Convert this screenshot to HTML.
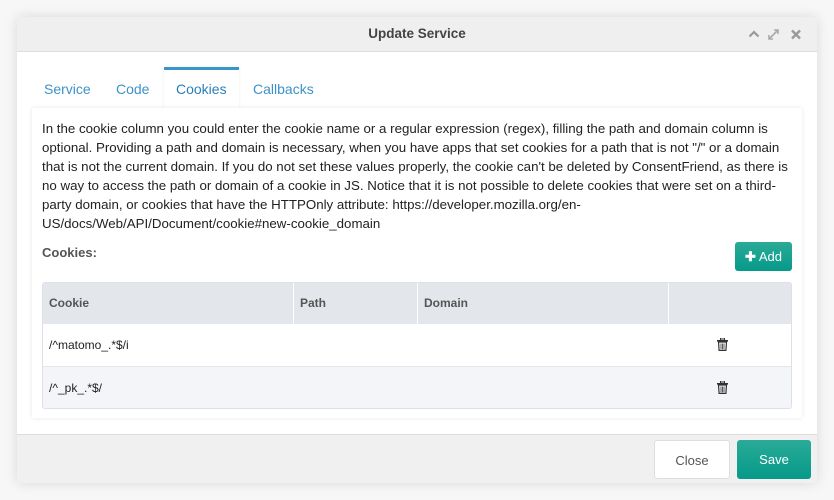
<!DOCTYPE html>
<html><head><style>
*{box-sizing:border-box;margin:0;padding:0}
body{width:834px;height:500px;background:#f7f7f7;font-family:"Liberation Sans",Arial,sans-serif;position:relative;overflow:hidden}
.dlg{position:absolute;left:17px;top:17px;width:800px;height:466px;background:#fff;box-shadow:0 0 12px rgba(0,0,0,.12)}
.hd{height:35px;background:#efefef;border-bottom:1px solid #ddd;text-align:center;line-height:34px;font-size:13.5px;font-weight:bold;color:#444}
.tabs{position:absolute;top:50px;left:15px;height:41px}
.tab{position:absolute;top:0;height:42px;line-height:45px;font-size:14px;color:#3a93c9;white-space:nowrap}
.tab.act{border-top:3px solid #3a93c9;background:#fff;line-height:39px;color:#2a7fb8;padding:0 12px;box-shadow:0 0 3px rgba(0,0,0,.08)}
.panel{position:absolute;left:15px;top:91px;width:770px;height:310px;background:#fff;box-shadow:0 0 4px rgba(0,0,0,.1)}
.txt{position:absolute;left:10px;top:11px;font-size:13.3px;line-height:19px;color:#222;white-space:nowrap}
.lbl{position:absolute;left:10px;top:137px;font-size:13px;font-weight:bold;color:#555}
.add{position:absolute;left:703px;top:134px;width:57px;height:29px;border-radius:3px;background:linear-gradient(#2aab97,#06998a);color:#fff;font-size:13px;line-height:29px;text-align:center}
.tbl{position:absolute;left:10px;top:174px;width:750px;height:127px;border:1px solid #dde1e5;border-radius:3px;overflow:hidden}
.th{height:41px;background:#e3e7eb;position:relative;font-size:12px;font-weight:bold;color:#555}
.th div{position:absolute;top:0;height:41px;line-height:41px;padding-left:6px;border-right:1px solid #fff}
.row{height:43px;position:relative;font-size:12px;color:#222;line-height:43px;border-bottom:1px solid #e3e6ea}
.row span{position:absolute;left:6px}
.tr{position:absolute;left:674px;top:14px;width:11px;height:13px}
.ft{position:absolute;left:0;top:417px;width:800px;height:49px;background:#f0f0f0;border-top:1px solid #ddd}
.btn{position:absolute;top:5px;height:39px;border-radius:3px;font-size:13px;line-height:39px;text-align:center}
</style></head><body>
<div class="dlg">
<div class="hd">Update Service</div>
<svg style="position:absolute;left:731px;top:11px" width="56" height="13" viewBox="0 0 56 13">
<path d="M1.5 8.5L6 4l4.5 4.5" fill="none" stroke="#999" stroke-width="2.2"/>
<path d="M21 11l9-9M26 2h4v4M21 7v4h4" fill="none" stroke="#aaa" stroke-width="1.6"/>
<path d="M44 2.5l8 8M52 2.5l-8 8" stroke="#999" stroke-width="2.4"/>
</svg>
<div class="tabs">
<div class="tab" style="left:12px">Service</div>
<div class="tab" style="left:84px">Code</div>
<div class="tab act" style="left:132px">Cookies</div>
<div class="tab" style="left:221px">Callbacks</div>
</div>
<div class="panel">
<div class="txt">In the cookie column you could enter the cookie name or a regular expression (regex), filling the path and domain column is<br>optional. Providing a path and domain is necessary, when you have apps that set cookies for a path that is not "/" or a domain<br>that is not the current domain. If you do not set these values properly, the cookie can't be deleted by ConsentFriend, as there is<br>no way to access the path or domain of a cookie in JS. Notice that it is not possible to delete cookies that were set on a third-<br>party domain, or cookies that have the HTTPOnly attribute: https://developer.mozilla.org/en-<br>US/docs/Web/API/Document/cookie#new-cookie_domain</div>
<div class="lbl">Cookies:</div>
<div class="add"><b>&#10010;</b> Add</div>
<div class="tbl">
<div class="th"><div style="left:0;width:251px">Cookie</div><div style="left:251px;width:124px">Path</div><div style="left:375px;width:251px">Domain</div></div>
<div class="row" style="background:#fff"><span>/^matomo_.*$/i</span>
<svg class="tr" viewBox="0 0 11 13"><rect x="0" y="2" width="11" height="1.6" fill="#333"/><rect x="3.5" y="0" width="4" height="2" fill="none" stroke="#333" stroke-width="1"/><path d="M1.5 4h8l-.6 8.5h-6.8z" fill="none" stroke="#333" stroke-width="1.2"/><path d="M4 5.5v6M5.5 5.5v6M7 5.5v6" stroke="#333" stroke-width=".8"/></svg></div>
<div class="row" style="background:#f3f5f8;border-bottom:none"><span>/^_pk_.*$/</span>
<svg class="tr" viewBox="0 0 11 13"><rect x="0" y="2" width="11" height="1.6" fill="#333"/><rect x="3.5" y="0" width="4" height="2" fill="none" stroke="#333" stroke-width="1"/><path d="M1.5 4h8l-.6 8.5h-6.8z" fill="none" stroke="#333" stroke-width="1.2"/><path d="M4 5.5v6M5.5 5.5v6M7 5.5v6" stroke="#333" stroke-width=".8"/></svg></div>
</div>
</div>
<div class="ft">
<div class="btn" style="left:637px;width:76px;background:#fff;border:1px solid #ddd;color:#555">Close</div>
<div class="btn" style="left:720px;width:74px;background:linear-gradient(#2aab97,#06998a);color:#fff">Save</div>
</div>
</div>
</body></html>
